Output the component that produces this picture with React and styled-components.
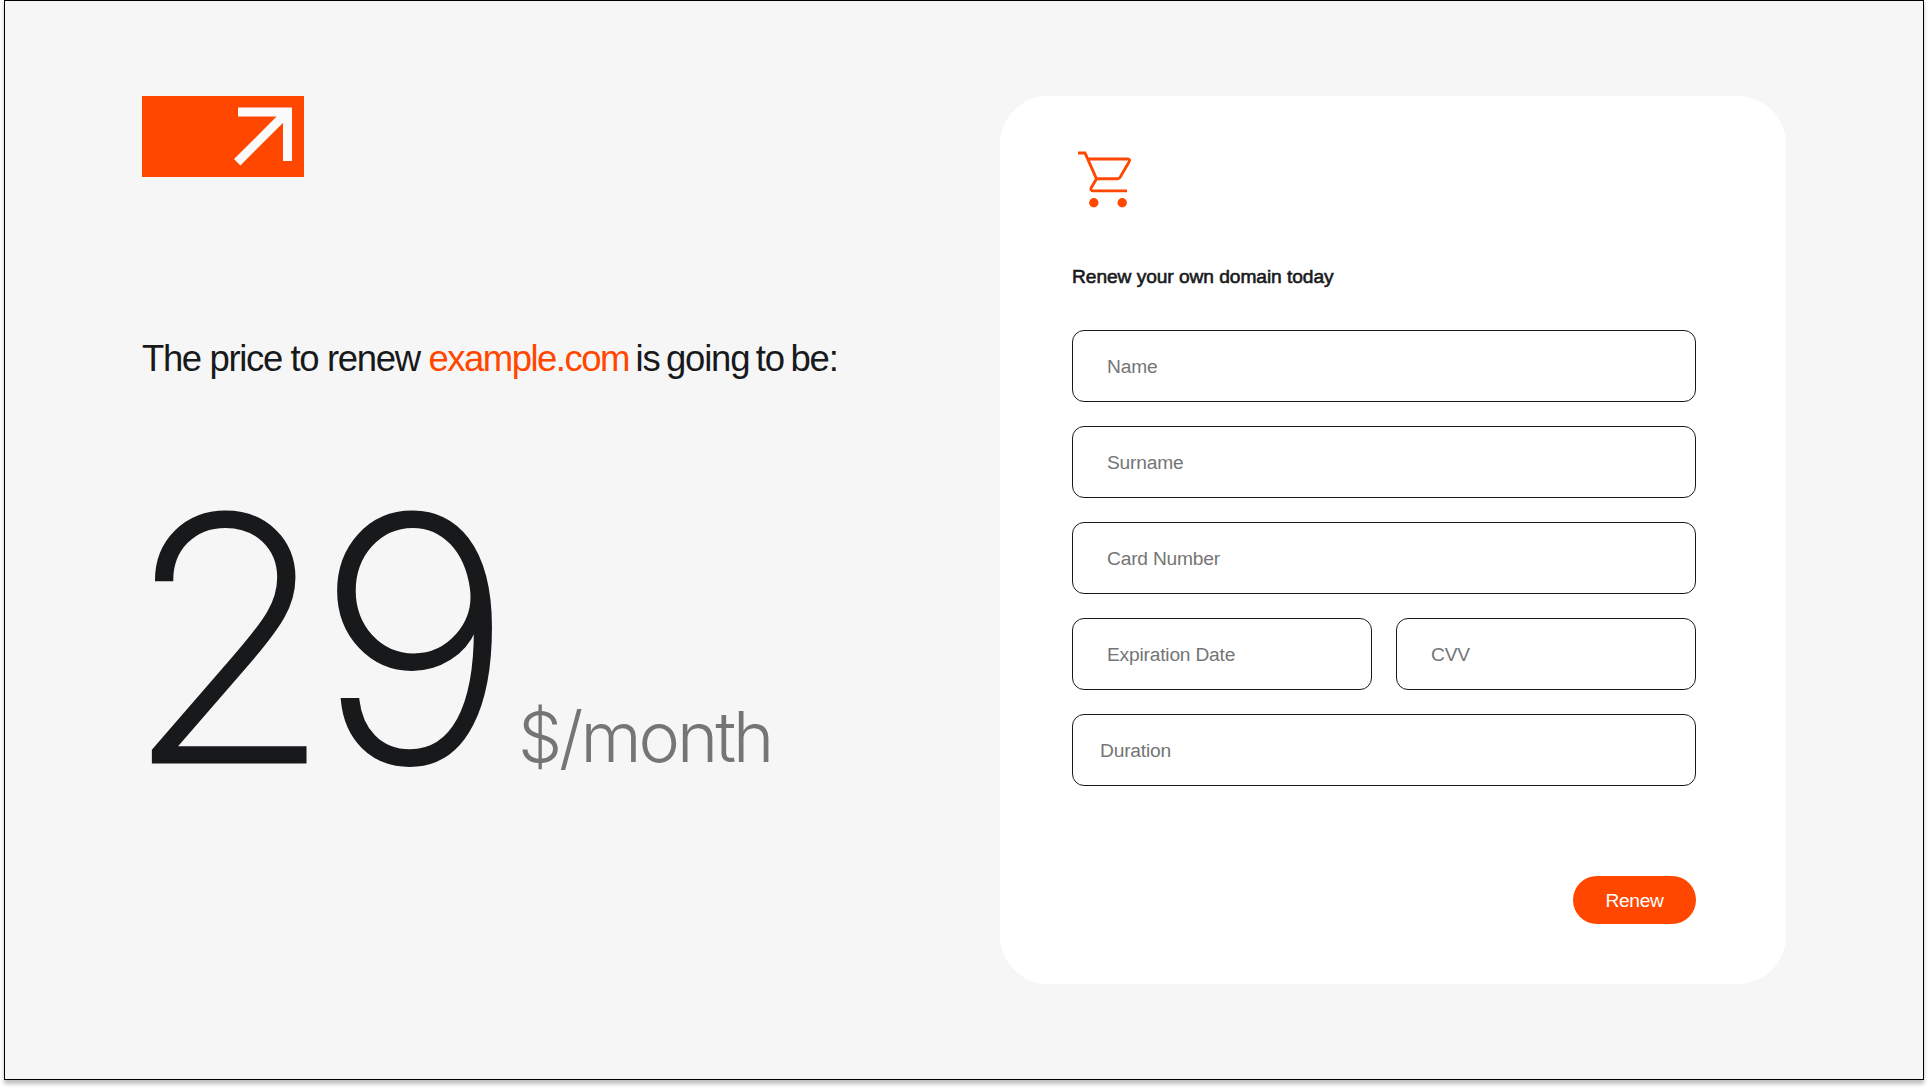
import React from "react";
import styled, { createGlobalStyle } from "styled-components";

const ink = "#18191b";
const accent = "#ff4700";
const paper = "#f6f6f6";

const GlobalStyle = createGlobalStyle`
  *, *::before, *::after { box-sizing: border-box; }
  body {
    margin: 0;
    background: #fff;
    color: ${ink};
    font-family: "Liberation Sans", Arial, sans-serif;
    overflow: hidden;
  }
`;

const Frame = styled.main`
  width: 1920px;
  height: 1080px;
  margin: 0 4px 8px;
  padding: 95px 137px;
  display: flex;
  justify-content: space-between;
  align-items: flex-start;
  background: ${paper};
  border: 1px solid #000;
  box-shadow: 0 4px 4px rgba(0, 0, 0, 0.25);
`;

const Offer = styled.section`
  display: flex;
  flex-direction: column;
  align-items: flex-start;
`;

const Logo = styled.svg`
  display: block;
  width: 162px;
  height: 81px;
`;

const Lead = styled.h1`
  margin: 160px 0 0;
  font-size: 36.5px;
  line-height: 44px;
  font-weight: 400;
  letter-spacing: -1.37px;
  white-space: nowrap;
`;

const Domain = styled.span`
  color: ${accent};
  letter-spacing: -1.5px;
`;

const Tail = styled.span`
  letter-spacing: -1.2px;
  word-spacing: -2.4px;
`;

const Price = styled.div`
  display: flex;
  align-items: baseline;
  margin: 58px 0 0 -18px;
  white-space: nowrap;
`;

const Amount = styled.span`
  font-family: Inter, "Liberation Sans", sans-serif;
  font-weight: 200;
  font-size: 339px;
  line-height: 400px;
  letter-spacing: -17.5px;
  -webkit-text-stroke: 3.2px ${ink};
`;

const Period = styled.span`
  margin-left: 22px;
  font-family: Inter, "Liberation Sans", sans-serif;
  font-weight: 300;
  font-size: 70px;
  letter-spacing: -3px;
  color: #757575;
`;

const Card = styled.form`
  width: 786px;
  height: 888px;
  padding: 48px 90px 60px 72px;
  display: flex;
  flex-direction: column;
  background: #fff;
  border-radius: 48px;
`;

const Cart = styled.svg`
  display: block;
  width: 72px;
  height: 72px;
`;

const Title = styled.h2`
  margin: 48px 0 41px;
  font-size: 19.2px;
  line-height: 25px;
  font-weight: 400;
  letter-spacing: -0.07px;
  -webkit-text-stroke: 0.6px ${ink};
`;

const Fields = styled.div`
  display: grid;
  grid-template-columns: 1fr 1fr;
  gap: 24px;
`;

const Field = styled.input`
  grid-column: ${(p) => (p.$half ? "auto" : "1 / -1")};
  width: 100%;
  height: 72px;
  padding: 2px ${(p) => p.$inset || 34}px 0;
  border: 1px solid ${ink};
  border-radius: 12px;
  background: #fff;
  outline: none;
  font: 400 19.2px "Liberation Sans", Arial, sans-serif;
  letter-spacing: -0.2px;
  &::placeholder { color: #757575; opacity: 1; }
`;

const Submit = styled.button`
  align-self: flex-end;
  margin-top: auto;
  width: 123px;
  height: 48px;
  padding: 2px 0 0;
  border: 0;
  border-radius: 24px;
  background: ${accent};
  color: #fff;
  font: 400 19.2px "Liberation Sans", Arial, sans-serif;
  letter-spacing: -0.3px;
`;

export default function App() {
  return (
    <>
      <GlobalStyle />
      <Frame>
        <Offer>
          <Logo viewBox="0 0 162 81" aria-hidden="true">
            <path fill={accent} d="M0 0h162v81H0z" />
            <path fill="none" stroke="#fafafa" strokeWidth="9" d="M96 16H145.5V65M145.5 16L95.2 66.3" />
          </Logo>
          <Lead>
            The price to renew <Domain>example.com</Domain>
            <Tail> is going to be:</Tail>
          </Lead>
          <Price>
            <Amount>29</Amount>
            <Period>$/month</Period>
          </Price>
        </Offer>
        <Card>
          <Cart viewBox="0 0 72 72" aria-hidden="true">
            <path
              fill="none"
              stroke={accent}
              strokeWidth="2.9"
              d="M6 9H13L24.5 34.8H45.6Q47.2 34.8 48 33.4L57 18Q58.6 15 55.6 15H15.7M24.5 34.8L19.4 43.4Q17.6 46.9 21.8 46.9H55"
            />
            <circle cx="21.8" cy="58.8" r="4.7" fill={accent} />
            <circle cx="50.2" cy="58.8" r="4.7" fill={accent} />
          </Cart>
          <Title>Renew your own domain today</Title>
          <Fields>
            <Field placeholder="Name" />
            <Field placeholder="Surname" />
            <Field placeholder="Card Number" />
            <Field placeholder="Expiration Date" $half />
            <Field placeholder="CVV" $half />
            <Field placeholder="Duration" $inset={27} />
          </Fields>
          <Submit type="button">Renew</Submit>
        </Card>
      </Frame>
    </>
  );
}
